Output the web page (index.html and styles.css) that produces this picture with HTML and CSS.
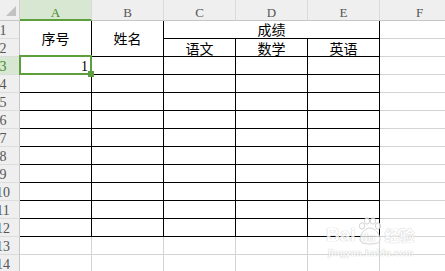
FILE: index.html
```html
<!DOCTYPE html>
<html lang="zh-CN">
<head>
    <meta charset="UTF-8">
    <meta name="viewport" content="width=device-width, initial-scale=1.0">
    <title>成绩表</title>
    <link rel="stylesheet" href="styles.css">
</head>
<body>
    <div class="sheet">
        <div class="corner"><span class="corner-mark"></span></div>
        <div class="col-head active">A</div>
        <div class="col-head">B</div>
        <div class="col-head">C</div>
        <div class="col-head">D</div>
        <div class="col-head">E</div>
        <div class="col-head">F</div>

        <div class="row-head">1</div>
        <div class="cell t merge-rows">序号</div>
        <div class="cell t merge-rows">姓名</div>
        <div class="cell t merge-cols">成绩</div>
        <div class="cell"></div>

        <div class="row-head">2</div>
        <div class="cell t">语文</div>
        <div class="cell t">数学</div>
        <div class="cell t">英语</div>
        <div class="cell"></div>

        <div class="row-head active">3</div>
        <div class="cell t num selected">1</div>
        <div class="cell t"></div><div class="cell t"></div><div class="cell t"></div><div class="cell t"></div>
        <div class="cell"></div>

        <div class="row-head">4</div>
        <div class="cell t"></div><div class="cell t"></div><div class="cell t"></div><div class="cell t"></div><div class="cell t"></div>
        <div class="cell"></div>

        <div class="row-head">5</div>
        <div class="cell t"></div><div class="cell t"></div><div class="cell t"></div><div class="cell t"></div><div class="cell t"></div>
        <div class="cell"></div>

        <div class="row-head">6</div>
        <div class="cell t"></div><div class="cell t"></div><div class="cell t"></div><div class="cell t"></div><div class="cell t"></div>
        <div class="cell"></div>

        <div class="row-head">7</div>
        <div class="cell t"></div><div class="cell t"></div><div class="cell t"></div><div class="cell t"></div><div class="cell t"></div>
        <div class="cell"></div>

        <div class="row-head">8</div>
        <div class="cell t"></div><div class="cell t"></div><div class="cell t"></div><div class="cell t"></div><div class="cell t"></div>
        <div class="cell"></div>

        <div class="row-head">9</div>
        <div class="cell t"></div><div class="cell t"></div><div class="cell t"></div><div class="cell t"></div><div class="cell t"></div>
        <div class="cell"></div>

        <div class="row-head">10</div>
        <div class="cell t"></div><div class="cell t"></div><div class="cell t"></div><div class="cell t"></div><div class="cell t"></div>
        <div class="cell"></div>

        <div class="row-head">11</div>
        <div class="cell t"></div><div class="cell t"></div><div class="cell t"></div><div class="cell t"></div><div class="cell t"></div>
        <div class="cell"></div>

        <div class="row-head">12</div>
        <div class="cell t"></div><div class="cell t"></div><div class="cell t"></div><div class="cell t"></div><div class="cell t"></div>
        <div class="cell"></div>

        <div class="row-head">13</div>
        <div class="cell"></div><div class="cell"></div><div class="cell"></div><div class="cell"></div><div class="cell"></div>
        <div class="cell"></div>

        <div class="row-head">14</div>
        <div class="cell"></div><div class="cell"></div><div class="cell"></div><div class="cell"></div><div class="cell"></div>
        <div class="cell"></div>
    </div>

    <!-- watermark -->
    <div class="watermark">
        <div class="wm-logo">
            <span>Bai</span>
            <span class="wm-paw">
                <svg width="24" height="28" viewBox="0 0 24 28">
                    <ellipse cx="4" cy="9" rx="2.6" ry="3.2"/>
                    <ellipse cx="9" cy="4" rx="2.6" ry="3.2"/>
                    <ellipse cx="15" cy="4" rx="2.6" ry="3.2"/>
                    <ellipse cx="20" cy="9" rx="2.6" ry="3.2"/>
                    <path d="M12 11 C7 11 2 17 2 22 C2 26 6 27 12 27 C18 27 22 26 22 22 C22 17 17 11 12 11 Z"/>
                </svg>
                <span class="wm-du">du</span>
            </span>
            <span class="wm-cn">经验</span>
        </div>
        <div class="wm-url">jingyan.baidu.com</div>
    </div>
</body>
</html>
```

FILE: styles.css
```css
* {
    box-sizing: border-box;
}
body {
    margin: 0;
    background: #fff;
    overflow: hidden;
    position: relative;
    font-family: "Noto Sans CJK SC", sans-serif;
}
.sheet {
    display: grid;
    grid-template-columns: 33px repeat(5, 72px) 80px;
    grid-template-rows: 21px repeat(14, 18px);
    margin-left: -13px;
    box-shadow: inset 0 1px #d6d6d6;
}
.corner {
    background: #efefef;
    border-right: 1px solid #cfcfcf;
    border-bottom: 1px solid #c6c6c6;
    display: flex;
    justify-content: flex-end;
    align-items: flex-end;
    padding: 0 3px 4px 0;
}
.corner-mark {
    width: 0;
    height: 0;
    border-left: 10px solid transparent;
    border-bottom: 10px solid #c2c2c2;
}
.col-head {
    background: #efefef;
    border-right: 1px solid #dadada;
    border-bottom: 1px solid #c6c6c6;
    font-family: "Liberation Serif", serif;
    font-size: 13px;
    line-height: 14px;
    padding-top: 6px;
    color: #555;
    text-align: center;
}
.col-head.active {
    background: #d8e7d2;
    color: #3d8d27;
    border-bottom: 2px solid #5e9f3d;
}
.row-head {
    background: #efefef;
    border-right: 1px solid #c6c6c6;
    border-bottom: 1px solid #dcdcdc;
    font-family: "Liberation Serif", serif;
    font-size: 14px;
    line-height: 16px;
    padding-top: 2px;
    color: #555;
    text-align: center;
    overflow: hidden;
}
.row-head.active {
    background: #d8e7d2;
    color: #3d8d27;
}
.cell {
    border-right: 1px solid #d4d4d4;
    border-bottom: 1px solid #d4d4d4;
    display: flex;
    align-items: flex-end;
    justify-content: center;
    font-size: 14px;
    line-height: 14px;
    padding-bottom: 1px;
    color: #000;
}
.cell.t {
    border-right-color: #000;
    border-bottom-color: #000;
}
.merge-rows {
    grid-row: span 2;
    align-items: center;
}
.merge-cols {
    grid-column: span 3;
    padding-bottom: 2px;
}
.num {
    justify-content: flex-end;
    padding: 0 3px 0 0;
    font-family: "Liberation Serif", serif;
}
.selected {
    position: relative;
    z-index: 2;
}
.selected::after {
    content: "";
    position: absolute;
    top: -2px;
    left: -1px;
    right: -1px;
    bottom: -1px;
    border: 2px solid #5e9f3d;
}
.selected::before {
    content: "";
    position: absolute;
    right: -3px;
    bottom: -3px;
    width: 6px;
    height: 6px;
    background: #5e9f3d;
    z-index: 3;
}

.watermark {
    position: absolute;
    left: 326px;
    top: 217px;
    color: #fff;
    text-shadow: 0 0 1px #c0c0c0, 0 0 1px #c0c0c0;
    opacity: 0.8;
}
.wm-logo {
    display: flex;
    align-items: flex-end;
    font-family: "Liberation Sans", sans-serif;
    font-weight: bold;
    font-size: 19px;
    line-height: 20px;
}
.wm-paw {
    position: relative;
    width: 24px;
    height: 28px;
    margin: 0 3px 0 2px;
}
.wm-paw svg {
    fill: #fff;
    stroke: #cacaca;
    stroke-width: 1;
}
.wm-du {
    position: absolute;
    left: 3px;
    bottom: 1px;
    font-size: 12px;
    line-height: 12px;
}
.wm-cn {
    font-family: "Noto Sans CJK SC", sans-serif;
    font-size: 15px;
    line-height: 18px;
    margin-bottom: 1px;
}
.wm-url {
    font-family: "Liberation Sans", sans-serif;
    font-weight: bold;
    font-size: 9px;
    letter-spacing: 0.4px;
    margin-top: 3px;
    padding-left: 2px;
}
```
